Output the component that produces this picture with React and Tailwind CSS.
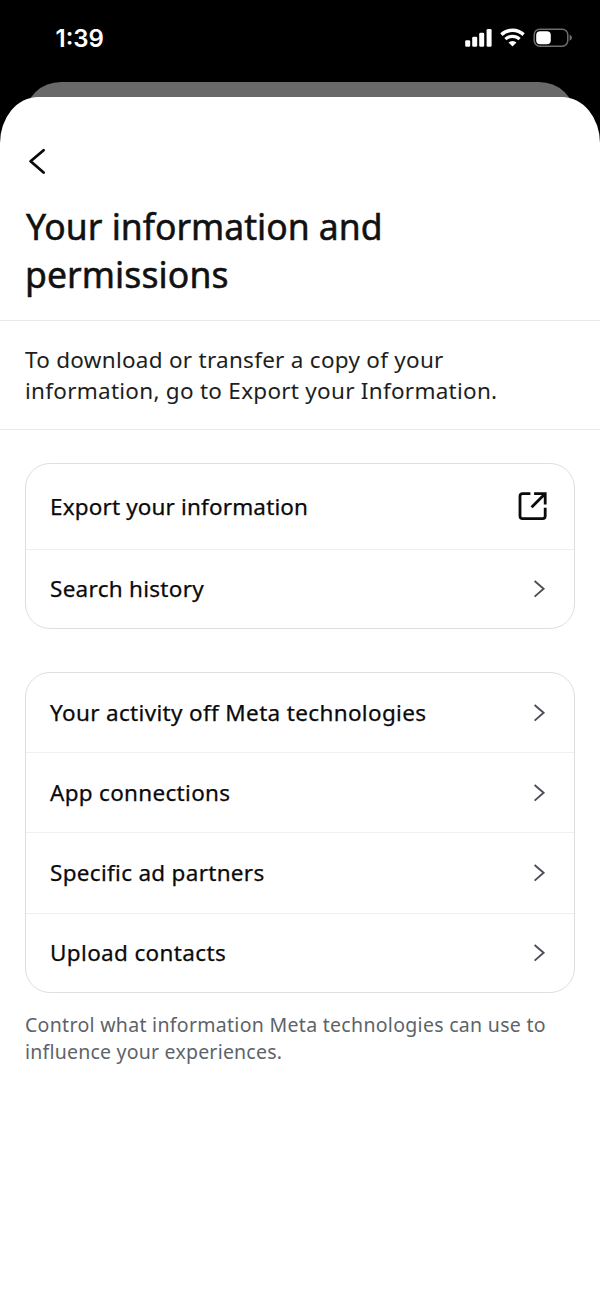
function SignalIcon() {
  return (
    <svg width="28" height="20" viewBox="0 0 28 20" fill="#fff">
      <rect x="0.2" y="12.2" width="5" height="6.6" rx="1.4" />
      <rect x="7.2" y="8.8" width="5" height="10" rx="1.4" />
      <rect x="14.2" y="4.8" width="5" height="14" rx="1.4" />
      <rect x="21.6" y="0.9" width="5" height="17.9" rx="1.4" />
    </svg>
  );
}

function WifiIcon() {
  return (
    <svg width="26" height="20" viewBox="0 0 26 20" fill="none" stroke="#fff">
      <path d="M1.4 6.6a16.6 16.6 0 0 1 22.2 0" strokeWidth="3.5" />
      <path d="M5.4 11.2a10.3 10.3 0 0 1 14.2 0" strokeWidth="3.2" />
      <path d="M12.5 18.6l-4-4a5.8 5.8 0 0 1 8 0z" fill="#fff" stroke="none" />
    </svg>
  );
}

function BatteryIcon() {
  return (
    <svg width="40" height="20" viewBox="0 0 40 20" fill="none">
      <rect x="1.2" y="1.2" width="33.6" height="17" rx="5.6" stroke="#6e6e6e" strokeWidth="1.5" />
      <rect x="3.2" y="3.2" width="14.6" height="13" rx="4" fill="#fff" />
      <path d="M36.6 6.8c1.6.6 2.3 1.6 2.3 2.9s-.7 2.3-2.3 2.9z" fill="#6e6e6e" />
    </svg>
  );
}

function BackIcon() {
  return (
    <svg width="20" height="28" viewBox="0 0 20 28" fill="none" stroke="#0a0a0a" strokeWidth="2.8" strokeLinecap="round" strokeLinejoin="round">
      <path d="M16.6 2.2L3.6 13.3l13 11.2" />
    </svg>
  );
}

function ExternalIcon() {
  return (
    <svg width="30" height="30" viewBox="0 0 30 30" fill="none" stroke="#0a0a0a" strokeWidth="2.8">
      <path d="M12.4 1.6H4.6Q2 1.6 2 4.2v19.8Q2 26.6 4.6 26.6h20q2.6 0 2.6-2.6v-8.2" />
      <path d="M16.1 1.6h11.1v11M26.8 2L13.6 15.2" />
    </svg>
  );
}

function ChevronIcon() {
  return (
    <svg width="14" height="20" viewBox="0 0 14 20" fill="none" stroke="#4b4f55" strokeWidth="1.9">
      <path d="M1.6 2l9 7.8-9 7.8" />
    </svg>
  );
}

function Row({ label, tracking, className, external }) {
  return (
    <div className={`flex items-center justify-between pl-6 ${external ? "pr-[26px]" : "pr-[27px]"} ${className}`}>
      <span className={`text-[22.5px] leading-8 whitespace-nowrap text-[#0a0a0a] [-webkit-text-stroke:0.25px_#0a0a0a] ${tracking}`}>{label}</span>
      {external ? <ExternalIcon /> : <ChevronIcon />}
    </div>
  );
}

export default function App() {
  return (
    <div className="flex h-[1298px] w-[600px] flex-col overflow-hidden bg-black font-['Noto_Sans',sans-serif]">
      <header className="flex h-[82px] shrink-0 items-start justify-between pr-[27px] pl-[55.5px]">
        <span className="pt-[25px] font-['Inter',sans-serif] text-[24px] leading-7 font-semibold text-white">1:39</span>
        <div className="flex pt-[28px]">
          <SignalIcon />
          <span className="ml-[7px]"><WifiIcon /></span>
          <span className="ml-[7px]"><BatteryIcon /></span>
        </div>
      </header>
      <div className="mx-[25px] h-9 shrink-0 rounded-t-[36px_34px] bg-[#696969]" />
      <main className="-mt-[21px] flex-1 rounded-t-[38px_46px] bg-white">
        <div className="pt-[51px] pl-[27px]">
          <BackIcon />
        </div>
        <h1 className="flex flex-col items-start border-b border-[#e9eaeb] pt-[26px] pb-[22px] pl-[26px] text-[35.5px] leading-[48px] whitespace-nowrap text-[#111] [-webkit-text-stroke:0.55px_#111]">
          <span>Your information and</span>
          <span className="-ml-px tracking-[0.1px]">permissions</span>
        </h1>
        <p className="flex flex-col items-start border-b border-[#e9eaeb] pt-[23px] pb-[23px] pl-[25px] text-[22.5px] leading-[31px] tracking-[0.27px] whitespace-nowrap text-[#1c1e21]">
          <span>To download or transfer a copy of your</span>
          <span>information, go to Export your Information.</span>
        </p>
        <section className="mx-[25px] mt-[33px] rounded-[25px] border border-[#dcdee0]">
          <Row external className="h-[85px]" tracking="tracking-[0.15px]" label="Export your information" />
          <Row className="h-[79px] border-t border-[#eeefef]" tracking="tracking-[0.28px]" label="Search history" />
        </section>
        <section className="mx-[25px] mt-[43px] rounded-[25px] border border-[#dcdee0]">
          <Row className="h-[79px]" tracking="tracking-[0.34px]" label="Your activity off Meta technologies" />
          <Row className="h-20 border-t border-[#eeefef]" tracking="tracking-[0.3px]" label="App connections" />
          <Row className="h-[81px] border-t border-[#eeefef]" tracking="tracking-[0.3px]" label="Specific ad partners" />
          <Row className="h-[79px] border-t border-[#eeefef]" tracking="tracking-[0.35px]" label="Upload contacts" />
        </section>
        <p className="flex flex-col items-start pt-[18px] pl-[25px] text-[19.5px] leading-[27px] whitespace-nowrap text-[#5d6369]">
          <span className="tracking-[0.3px]">Control what information Meta technologies can use to</span>
          <span className="tracking-[0.22px]">influence your experiences.</span>
        </p>
      </main>
    </div>
  );
}
